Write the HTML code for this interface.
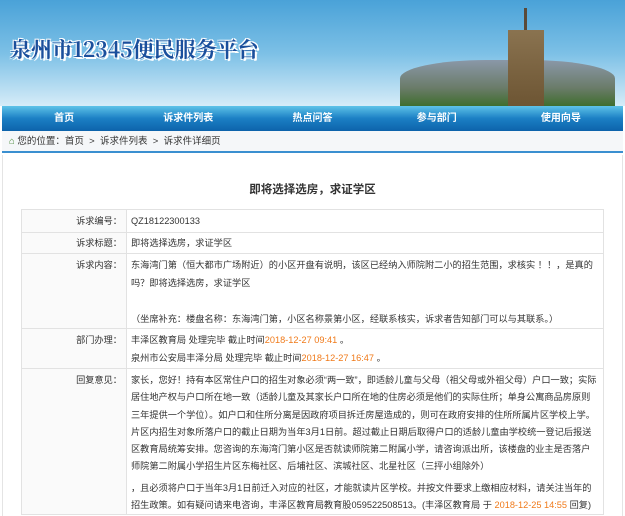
<!DOCTYPE html>
<html><head><meta charset="utf-8"><style>
*{margin:0;padding:0;box-sizing:border-box}
body{width:625px;height:516px;overflow:hidden;background:#fff;font-family:"Liberation Sans","Noto Sans CJK SC",sans-serif;font-size:9.2px;color:#333;position:relative}
.banner{position:absolute;left:0;top:0;width:625px;height:106px;background:linear-gradient(180deg,#4aa2d8 0%,#7cc0e6 50%,#d6ecf8 100%);overflow:hidden}
.logo{position:absolute;left:10px;top:34px;font-size:21px;font-weight:bold;color:#1a4f9c;text-shadow:2px 2px 0 #fff,-1px -1px 0 #fff,1px -1px 0 #fff,-1px 1px 0 #fff;font-family:"Noto Serif CJK SC","Liberation Sans",serif}
.city{position:absolute;left:400px;top:60px;width:215px;height:46px;background:linear-gradient(180deg,#8a98a8,#6b7c6a 60%,#3f6e2e);border-radius:40% 40% 0 0}
.tower{position:absolute;left:508px;top:30px;width:36px;height:76px;background:linear-gradient(#8a7350,#6d5533)}
.tower:before{content:"";position:absolute;left:16px;top:-22px;width:3px;height:22px;background:#5a4a38}
.nav{position:absolute;left:2px;top:106px;width:621px;height:25px;background:linear-gradient(#5ec3e8,#1b7fc4 50%,#0d63ab);display:flex}
.nav div{flex:1;text-align:center;color:#fff;font-weight:bold;font-size:10px;line-height:25px}
.crumb{position:absolute;left:2px;top:131px;width:621px;height:22px;background:#f5f7f9;border-bottom:2px solid #3a8fd0;line-height:21px;padding-left:7px;font-size:9.5px;color:#333}
.crumb b{color:#4a8a3a;font-weight:normal}
.page{position:absolute;left:2px;top:155px;width:621px;height:361px;border-left:1px solid #e4e4e4;border-right:1px solid #e4e4e4}
h1{position:absolute;left:0;top:181px;width:625px;text-align:center;font-size:11.5px;font-weight:bold;color:#333}
table{position:absolute;left:21px;top:209px;width:583px;border-collapse:collapse;border:1px solid #ccc;table-layout:fixed}
td{border:1px solid #e2e2e2;vertical-align:top;font-size:9.2px;line-height:18px}
td.l{width:105px;text-align:right;padding:2px 4px 0 0;background:#fafafa}
td.r{padding:2px 6px 0 4px}
.o{color:#f07a1a}
.rep{line-height:17.3px}
</style></head><body>
<div class="banner"><div class="logo">泉州市12345便民服务平台</div><div class="city"></div><div class="tower"></div></div>
<div class="nav"><div>首页</div><div>诉求件列表</div><div>热点问答</div><div>参与部门</div><div>使用向导</div></div>
<div class="crumb"><b>⌂</b> 您的位置：首页 &nbsp;&gt;&nbsp; 诉求件列表 &nbsp;&gt;&nbsp; 诉求件详细页</div>
<div class="page"></div>
<h1>即将选择选房，求证学区</h1>
<table>
<tr style="height:23px"><td class="l">诉求编号：</td><td class="r">QZ18122300133</td></tr>
<tr style="height:21px"><td class="l" style="padding-top:1px">诉求标题：</td><td class="r" style="padding-top:1px">即将选择选房，求证学区</td></tr>
<tr style="height:75px"><td class="l">诉求内容：</td><td class="r">东海湾门第（恒大都市广场附近）的小区开盘有说明，该区已经纳入师院附二小的招生范围，求核实 ！！，是真的吗？即将选择选房，求证学区<br><br>（坐席补充：楼盘名称：东海湾门第，小区名称景第小区，经联系核实，诉求者告知部门可以与其联系。）</td></tr>
<tr style="height:40px"><td class="l">部门办理：</td><td class="r">丰泽区教育局 处理完毕 截止时间<span class="o">2018-12-27 09:41</span> 。<br>泉州市公安局丰泽分局 处理完毕 截止时间<span class="o">2018-12-27 16:47</span> 。</td></tr>
<tr><td class="l rep" style="padding-top:3px">回复意见：</td><td class="r rep" style="padding-top:3px">家长，您好！持有本区常住户口的招生对象必须“两一致”，即适龄儿童与父母（祖父母或外祖父母）户口一致；实际居住地产权与户口所在地一致（适龄儿童及其家长户口所在地的住房必须是他们的实际住所；单身公寓商品房原则三年提供一个学位）。如户口和住所分离是因政府项目拆迁房屋造成的，则可在政府安排的住所所属片区学校上学。片区内招生对象所落户口的截止日期为当年3月1日前。超过截止日期后取得户口的适龄儿童由学校统一登记后报送区教育局统筹安排。您咨询的东海湾门第小区是否就读师院第二附属小学，请咨询派出所，该楼盘的业主是否落户师院第二附属小学招生片区东梅社区、后埔社区、滨城社区、北星社区（三抨小组除外）<div style="margin-top:4px">，且必须将户口于当年3月1日前迁入对应的社区，才能就读片区学校。并按文件要求上缴相应材料，请关注当年的招生政策。如有疑问请来电咨询，丰泽区教育局教育股059522508513。(丰泽区教育局 于 <span class="o">2018-12-25 14:55</span> 回复)</div></td></tr>
</table>
</body></html>
